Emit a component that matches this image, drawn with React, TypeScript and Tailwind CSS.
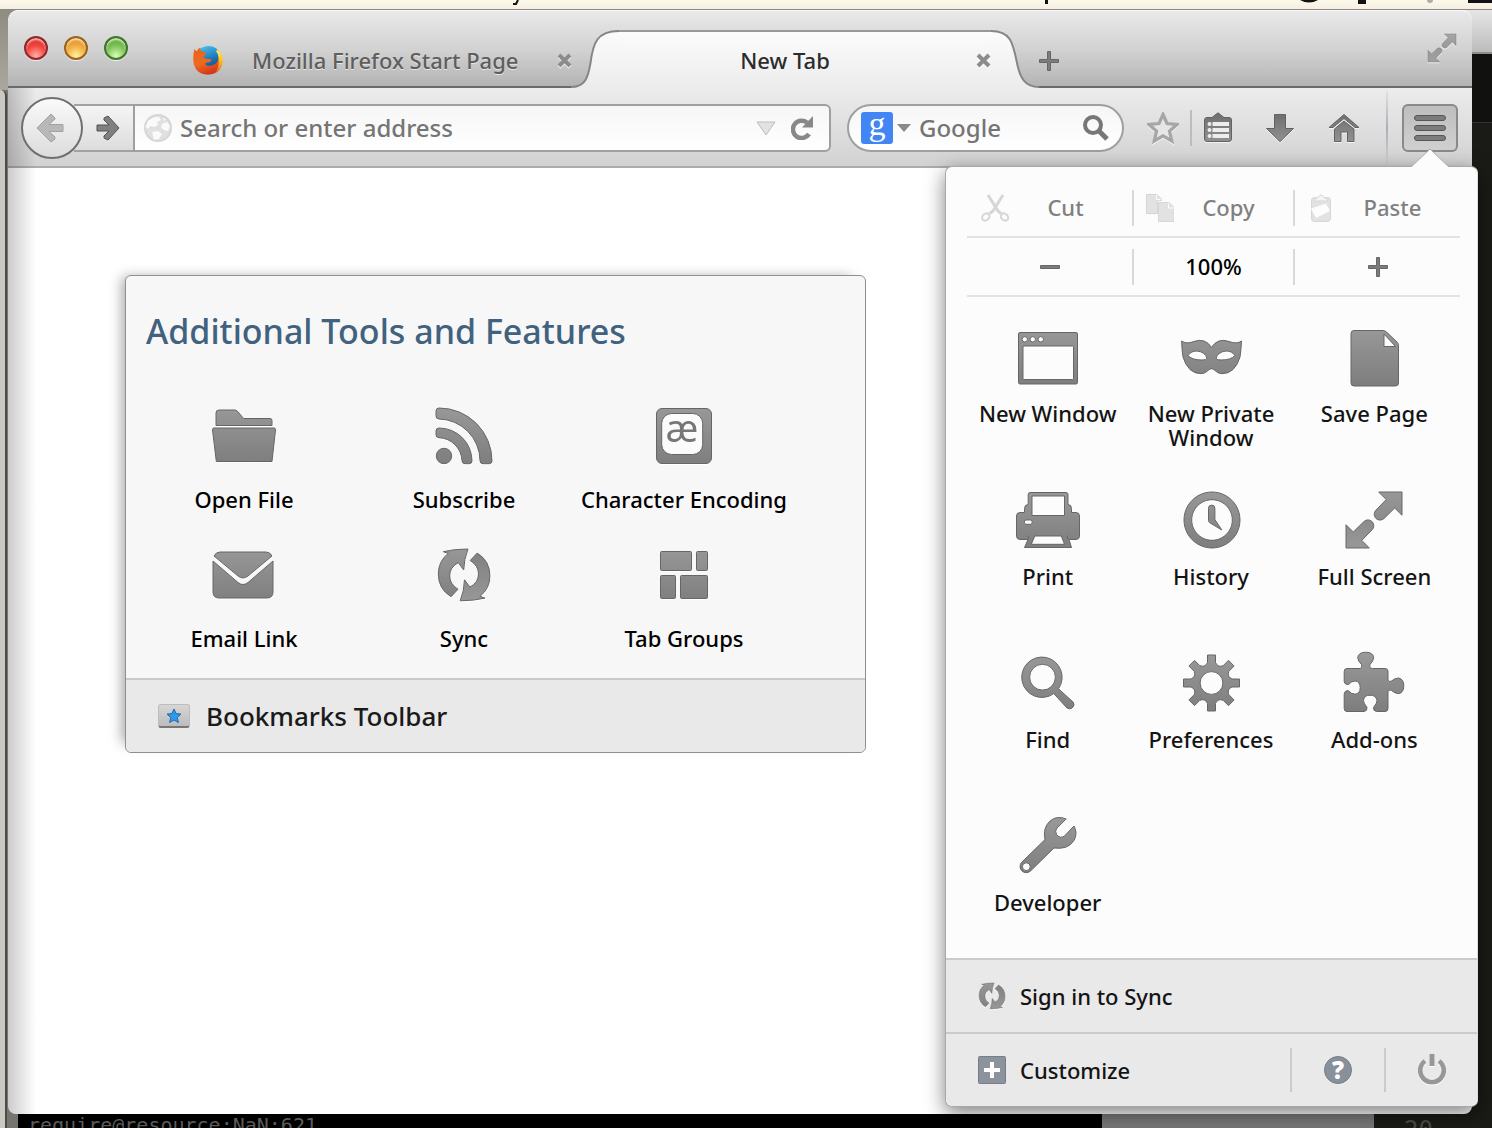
import type { ReactNode } from "react";

const gearPath = (() => {
  const pts: string[] = [];
  const at = (deg: number, r: number, side: number) => {
    const a = (deg * Math.PI) / 180;
    const x = 32.5 + r * Math.sin(a) + side * Math.cos(a);
    const y = 32 - r * Math.cos(a) + side * Math.sin(a);
    return `${x.toFixed(2)} ${y.toFixed(2)}`;
  };
  for (let k = 0; k < 8; k++) {
    const d = k * 45;
    pts.push(`${k === 0 ? "M" : "L"}${at(d, 20.5, -4)}L${at(d, 28, -4)}L${at(d, 28, 4)}L${at(d, 20.5, 4)}`);
    pts.push(`Q${at(d + 22.5, 16.5, 0)} ${at(d + 45, 20.5, -4)}`);
  }
  return pts.join("") + "ZM43.9 32A11.4 11.4 0 1 0 21.1 32A11.4 11.4 0 1 0 43.9 32Z";
})();

const syncHalf =
  "M11.3 8.7Q22 6 36 6Q32 16 31.7 27L26.3 19.7Q17.7 24 17.7 33Q17.7 41 26 46.3L19 53.7Q6.3 46 6.3 31Q6.3 18 16.3 10.5Z";
const arrowHalf = "M36.7 4H60V27.3L52.7 20L42 30.5A5.8 5.8 0 0 1 33.8 22.3L44.2 11.6Z";

function Defs() {
  return (
    <svg width="0" height="0" className="absolute" aria-hidden="true">
      <defs>
        <linearGradient id="metal" gradientUnits="userSpaceOnUse" x1="0" y1="0" x2="0" y2="64">
          <stop offset="0" stopColor="#9a9a9a" />
          <stop offset="1" stopColor="#7c7c7c" />
        </linearGradient>
        <linearGradient id="metalSmall" gradientUnits="userSpaceOnUse" x1="0" y1="0" x2="0" y2="32">
          <stop offset="0" stopColor="#6c6c6c" />
          <stop offset="1" stopColor="#949494" />
        </linearGradient>
        <linearGradient id="tabFill" x1="0" y1="0" x2="0" y2="1">
          <stop offset="0" stopColor="#fcfcfc" />
          <stop offset="1" stopColor="#ececec" />
        </linearGradient>
        <linearGradient id="foxBlue" x1="0.3" y1="0" x2="0.7" y2="1">
          <stop offset="0" stopColor="#45c3ee" />
          <stop offset="0.5" stopColor="#1f76b9" />
          <stop offset="1" stopColor="#183a78" />
        </linearGradient>
        <linearGradient id="foxOrange" x1="0" y1="0" x2="0.4" y2="1">
          <stop offset="0" stopColor="#e8641b" />
          <stop offset="0.6" stopColor="#ee6a1f" />
          <stop offset="1" stopColor="#d23a1c" />
        </linearGradient>
        <linearGradient id="foxTail" x1="0" y1="0" x2="0" y2="1">
          <stop offset="0" stopColor="#fff27a" />
          <stop offset="0.5" stopColor="#fbc31b" />
          <stop offset="1" stopColor="#ec6a1c" />
        </linearGradient>
      </defs>
    </svg>
  );
}

function Glyph({ children, className = "size-16" }: { children: ReactNode; className?: string }) {
  return (
    <svg
      viewBox="0 0 64 64"
      className={`${className} shrink-0 drop-shadow-[0_1px_0_#ffffff]`}
      fill="url(#metal)"
      stroke="#666666"
      strokeWidth="1"
      fillRule="evenodd"
      aria-hidden="true"
    >
      {children}
    </svg>
  );
}

const Sync = ({ className = "size-16" }: { className?: string }) => (
  <Glyph className={className}>
    <path d={syncHalf} />
    <path d={syncHalf} transform="rotate(180 32.1 31.9)" />
  </Glyph>
);

const Expand = ({ className = "size-16" }: { className?: string }) => (
  <Glyph className={className}>
    <path d={arrowHalf} />
    <path d={arrowHalf} transform="rotate(180 32 32)" />
  </Glyph>
);

const tools: [string, ReactNode][] = [
  ["Open File", <Glyph>
    <path d="M4 9q0-3 3-3H23q2 0 4 3l4.500 5.500H58q2 0 2 2V21.500H4Z" />
    <path d="M2 24H62q1.500 0 1.500 2L60 57.500H4.300L.5 26Q.5 24 2 24Z" />
  </Glyph>],
  ["Subscribe", <Glyph>
    <circle cx="12" cy="52" r="7.700" />
    <path d="M4 7q0-3 3-3A53 53 0 0 1 60 57q0 2.700-2.700 2.700H51q-3 0-3-3A42 42 0 0 0 7 15q-3 0-3-3Z" />
    <path d="M4 27q0-3 3-3A33 33 0 0 1 40 57q0 2.700-2.700 2.700H33q-3 0-3-3A24 24 0 0 0 7 33.700q-3 0-3-3Z" />
  </Glyph>],
  ["Character Encoding", <Glyph>
    <rect x="4.500" y="4.500" width="55" height="55" rx="5.500" />
    <rect x="9.700" y="9.500" width="41" height="41" rx="10" fill="#fbfbfb" />
    <text x="30" y="38" textAnchor="middle" fontSize="38" fill="#777777" stroke="none" className="font-[Noto_Sans,sans-serif] font-normal">æ</text>
  </Glyph>],
  ["Email Link", <Glyph>
    <path d="M2 13Q4 9 8 9H54Q58 9 60 13L36 33Q31 37 26 33Z" />
    <path d="M1 18L26 39.500Q31 43.500 36 39.500L61 18V49q0 6-6 6H7q-6 0-6-6Z" />
  </Glyph>],
  ["Sync", <Sync />],
  ["Tab Groups", <Glyph>
    <rect x="8.500" y="8.500" width="31" height="19" rx="1" />
    <rect x="44.500" y="8.500" width="11" height="19" rx="1" />
    <rect x="8.500" y="32.500" width="15" height="23" rx="1" />
    <rect x="28.500" y="32.500" width="27" height="23" rx="1" />
  </Glyph>],
];

const actions: [string, ReactNode][] = [
  ["New Window", <Glyph>
    <path d="M4 7.500H60q1.500 0 1.500 1.500V57.500q0 1.500-1.500 1.500H4q-1.500 0-1.500-1.500V9q0-1.500 1.500-1.500ZM8 21q-1 0-1 1V53.500q0 1 1 1H56.500q1 0 1-1V22q0-1-1-1Z" />
    <g fill="#fcfcfc">
      <circle cx="8.800" cy="14.300" r="2.700" /><circle cx="16.800" cy="14.300" r="2.700" /><circle cx="24.800" cy="14.300" r="2.700" />
    </g>
  </Glyph>],
  ["New Private Window", <Glyph>
    <path d="M2.600 16Q7 19.500 15 16.500Q26 12.500 32.500 22.300Q39 12.500 50 16.500Q58 19.500 62.500 16Q62 26 61 32Q56 48.700 43 48.700Q39 48.700 36 45.500Q32.500 42 29 45.500Q26 48.700 22 48.700Q9 48.700 4 32Q3 26 2.600 16ZM9 30.500Q12 26 18 26Q26.500 27 28 33.500Q27 35 23 35Q13 35 9 30.500ZM56 30.500Q53 26 47 26Q38.500 27 37 33.500Q38 35 42 35Q52 35 56 30.500Z" />
  </Glyph>],
  ["Save Page", <Glyph>
    <path d="M12 5.500H41Q43 5.500 45 7.500L55 17Q56.500 18.500 56.500 20.500V58q0 3-3 3H12q-3 0-3-3V8.500q0-3 3-3ZM42 9V21.500H53.500Z" />
  </Glyph>],
  ["Print", <Glyph>
    <path d="M14 4.500H50q2 0 2 2V16.500q3.500 0 3.500 4V24.500H60q3.500 0 3.500 3.500V48q0 3.500-3.500 3.500H53L55.500 59.500H8.500L12 51.500H4Q.5 51.500 .5 48V28q0-3.500 3.500-3.500H8.500V20.500q0-4 3.700-4V6.500q0-2 1.800-2ZM16 8V27.500H48.500V8ZM10 32a2.200 2.200 0 0 0 0 4.300H14.500a2.200 2.200 0 0 0 0-4.300ZM18.800 48L15.300 56.300H48.500L45.300 48Z" />
    <path d="M12.500 47.500V51M51.500 47.500V51" />
  </Glyph>],
  ["History", <Glyph>
    <path d="M33 4A28 28 0 1 1 32.990 4ZM33 11.700A20.300 20.300 0 1 0 33.010 11.700Z" />
    <path d="M29.500 20.300a3.200 3.200 0 0 1 6.400 0V31.500L42.800 42L30.800 34.800Q29.500 34 29.500 32.500Z" />
  </Glyph>],
  ["Full Screen", <Expand />],
  ["Find", <Glyph>
    <path d="M42.500 37.800L57 51Q59 53.500 57.200 55.800L55.800 57.200Q53.500 58.600 51 57L37.800 42.600A20.200 20.200 0 1 1 42.500 37.800ZM39.400 26.200A12.900 12.900 0 1 0 13.600 26.200A12.900 12.900 0 1 0 39.400 26.200Z" />
  </Glyph>],
  ["Preferences", <Glyph><path d={gearPath} /></Glyph>],
  ["Add-ons", <Glyph>
    <path d="M5 17.500H17Q20.500 17.500 19.500 13.500Q15.700 10 15.700 6.500Q16.500 1.200 23.700 1.200Q31 1.200 31.700 6.500Q31.500 10 28 13.500Q27 17.500 30.500 17.500H43Q46 17.500 46 20.500V29Q46.500 31.500 49.500 30Q53 27 56.500 27Q61.800 28 61.800 34.700Q61.800 42 56.500 42.700Q53 42.500 49.500 39.500Q46.500 38 46 41V57.500Q46 60.500 43 60.500H34.500Q31 60 31.500 56.500Q35 52 35 49.500Q34 44.200 28 44.200Q22 44.200 21.500 49.500Q21.500 52 25 56.500Q25.500 60 22 60.500H5Q2.200 60.500 2.200 57.500V43Q2.500 39.500 6 39.500Q9.500 43.200 13 43.200Q18.200 42.500 18.200 36.700Q18.200 30.500 13 30Q9.500 30 6.500 33.500Q3 34 2.200 31V20.500Q2.200 17.500 5 17.500Z" />
  </Glyph>],
  ["Developer", <Glyph>
    <path d="M50.200 5L41 14Q38.500 17 40.500 20.500Q44 25 48.500 22L58 12Q62 19 58 26.500Q52 36 38 34L14.500 57A6.200 6.200 0 0 1 5.500 48.500L29 25.500Q26.500 14 34 7Q41 1 50.200 5ZM14.200 52.700A3.900 3.900 0 1 0 6.400 52.700A3.900 3.900 0 1 0 14.200 52.700Z" />
  </Glyph>],
];

const edits: [string, ReactNode][] = [
  ["Cut", <>
    <path d="M7 1L17 17L20 19.500M22 1L12 17L8.500 19.500" strokeWidth="3" fill="none" />
    <ellipse cx="4.800" cy="23" rx="4" ry="3.200" fill="none" strokeWidth="2" transform="rotate(-45 4.800 23)" />
    <ellipse cx="23.500" cy="23" rx="4" ry="3.200" fill="none" strokeWidth="2" transform="rotate(45 23.500 23)" />
  </>],
  ["Copy", <>
    <path d="M.5 .5H11L15.500 5V6.500H11.500V19.500H.5Z" />
    <path d="M12.500 8.500H23L28 13.500V27.500H12.500Z" />
    <path d="M10.500 1V5.500H15M22.500 9V14H27.500" stroke="#fcfcfc" fill="none" />
  </>],
  ["Paste", <>
    <rect x="4.500" y="3.500" width="19" height="24" rx="3" />
    <path d="M7 7Q8.500 3.500 11 3.500Q14 -1.500 17 3.500Q19.500 3.500 21 7Z" fill="#f4f4f4" />
    <path d="M4 14.500L19 9.500L23 17L9 24Z" fill="#fcfcfc" stroke="none" />
  </>],
];

function CloseX() {
  return (
    <svg viewBox="0 0 15 15" className="size-[15px] drop-shadow-[0_1px_0_#ffffff]" aria-hidden="true">
      <path d="M2 2L13 13M13 2L2 13" stroke="#8c8c8c" strokeWidth="4" />
    </svg>
  );
}

function Small({ children }: { children: ReactNode }) {
  return (
    <svg viewBox="0 0 32 32" className="size-8 drop-shadow-[0_1px_0_#f4f4f4]" fill="url(#metalSmall)" stroke="#626262" strokeWidth="1" aria-hidden="true">
      {children}
    </svg>
  );
}

const PlusMinus = ({ plus }: { plus?: boolean }) => (
  <svg viewBox="0 0 20 20" className="size-5" fill="#7c7c7c" stroke="#666666" aria-hidden="true">
    <path d={plus ? "M8.500 .5H11.500V8.500H19.500V11.500H11.500V19.500H8.500V11.500H.5V8.500H8.500Z" : "M.5 8.500H19.500V11.500H.5Z"} />
  </svg>
);

function Desktop() {
  return (
    <div className="absolute inset-0 flex flex-col" aria-hidden="true">
      <div className="h-[10px] border-b border-[#8b8982] bg-gradient-to-b from-[#fcf8ea] to-[#f4efe2]">
        <svg width="1492" height="9" className="block">
          <path d="M518 0L516 4L513 4" stroke="#111111" strokeWidth="2" fill="none" />
          <path d="M1045 0H1048V4H1045ZM1358 0H1366V4H1358ZM1468 0H1492V3H1468ZM1300 0H1318Q1309 5 1300 0Z" fill="#111111" />
          <circle cx="1430" cy="0" r="3" fill="#b0ada3" />
        </svg>
      </div>
      <div className="flex flex-1">
        <div className="flex w-[18px] flex-col bg-[#77756f]">
          <div className="h-[80px] bg-gradient-to-b from-[#8f8c82] to-[#aaa89e]" />
          <div className="w-[7px] flex-1 rounded-tr-md border-r-2 border-[#4e4c48] bg-[#c9c8c3]" />
        </div>
        <div className="flex flex-1 flex-col justify-end bg-black">
          <p className="h-[14px] overflow-hidden pl-[10px] font-['DejaVu_Sans_Mono',monospace] text-[20px] leading-[22px] text-[#5b5b5b]">require@resource:NaN:621</p>
        </div>
        <div className="w-[272px] bg-[#777777]" />
        <div className="flex w-[118px] flex-col bg-[#1a1a16]">
          <div className="h-[44px] border-b-2 border-[#8d8d8d] bg-gradient-to-b from-[#e6e6e6] to-[#bcbcbc]" />
          <div className="h-[69px] border-b border-[#333333] bg-[#11110f]" />
          <p className="mt-auto h-[10px] overflow-hidden pl-[30px] font-['DejaVu_Sans_Mono',monospace] text-[24px] leading-6 text-[#4a4a46]">20</p>
        </div>
      </div>
    </div>
  );
}

function TabStrip() {
  return (
    <div className="flex h-[78px] items-end rounded-t-[10px] border-t border-[#f8f8f8] bg-gradient-to-b from-[#e9e9e9] via-[#d2d2d2] to-[#b2b2b2]">
      <div className="flex h-full border-b-2 border-[#6b6b6b] pl-4">
        <div className="mt-[25px] flex gap-4">
          <button aria-label="Close window" className="size-6 rounded-full border-2 border-[#8c2a28] bg-[radial-gradient(circle_at_50%_90%,#ffb0a8,#f4453f_50%,#c22a28)] shadow-[0_1px_0_#f0f0f0,inset_0_2px_2px_#ffb5b0]" />
          <button aria-label="Minimize window" className="size-6 rounded-full border-2 border-[#9a6420] bg-[radial-gradient(circle_at_50%_90%,#fff3a0,#f2ac40_50%,#cf8426)] shadow-[0_1px_0_#f0f0f0,inset_0_2px_2px_#ffe0a8]" />
          <button aria-label="Zoom window" className="size-6 rounded-full border-2 border-[#41752b] bg-[radial-gradient(circle_at_50%_90%,#d6ffb0,#7ec25a_50%,#4f9433)] shadow-[0_1px_0_#f0f0f0,inset_0_2px_2px_#cdf0b4]" />
        </div>
        <div className="mt-[19px] ml-[65px] flex h-[60px] w-[379px] items-center">
          <svg viewBox="0 0 30 30" className="size-[30px] shrink-0" aria-hidden="true">
            <circle cx="15.500" cy="14.500" r="13.500" fill="url(#foxBlue)" />
            <path d="M1.500 4Q2.500 6 4 6Q5 3 7.500 2.500Q7 4.500 8 6.500Q11 6 13 7.500Q13.500 10 10.500 11Q10 12.500 12 13.500Q14 14 18.500 14.500Q18 18 13.500 17.500Q11 19.500 14 20.500Q19 21.500 23 18.500Q25 16.500 25.500 13Q29.500 16 28.700 20Q26 29.500 15 29.800Q3.500 29.500 .7 19Q-.5 10 1.500 4Z" fill="url(#foxOrange)" />
            <path d="M23 3Q30.500 9 29.700 17Q28.500 24 23 27.500Q26.500 20 25.600 13Q25 8 22.500 5.500Q24 5.500 24.500 6.500Q24.500 4.500 23 3Z" fill="url(#foxTail)" />
          </svg>
          <span className="ml-[29px] text-[22px] whitespace-nowrap text-[#5e5e5e] [text-shadow:0_1px_0_#e6e6e6]">Mozilla Firefox Start Page</span>
          <button aria-label="Close Mozilla Firefox Start Page" className="ml-auto"><CloseX /></button>
        </div>
      </div>
      <svg viewBox="0 0 48 58" className="-ml-[1px] h-[58px] w-12 shrink-0" aria-hidden="true">
        <path d="M0 57C14 57 17 48 19.500 33C22 13 26 1 48 1V58H0Z" fill="url(#tabFill)" />
        <path d="M0 57C14 57 17 48 19.500 33C22 13 26 1 48 1" fill="none" stroke="#868686" strokeWidth="2" />
      </svg>
      <div className="flex h-[58px] w-[372px] items-center border-t-2 border-[#999999] bg-gradient-to-b from-[#fcfcfc] to-[#ececec]">
        <span className="flex-1 pr-[25px] text-center text-[22px] text-[#2c2c2c]">New Tab</span>
        <button aria-label="Close New Tab"><CloseX /></button>
      </div>
      <svg viewBox="0 0 48 58" className="h-[58px] w-12 shrink-0" aria-hidden="true">
        <path d="M48 57C34 57 29 48 26 33C22 13 20 1 0 1V58H48Z" fill="url(#tabFill)" />
        <path d="M48 57C34 57 29 48 26 33C22 13 20 1 0 1" fill="none" stroke="#868686" strokeWidth="2" />
      </svg>
      <div className="flex h-full flex-1 justify-between border-b-2 border-[#6b6b6b] pr-[14px]">
        <button aria-label="Open a new tab" className="mt-10 self-start"><PlusMinus plus /></button>
        <button aria-label="Enter full screen" className="mt-[21px] self-start opacity-80"><Expand className="size-8" /></button>
      </div>
    </div>
  );
}

function Toolbar() {
  return (
    <div className="flex h-20 items-center border-b-2 border-[#acacac] bg-gradient-to-b from-[#ececec] to-[#d2d2d2] pt-[2px] pr-[14px] pl-[13px]">
      <button aria-label="Back" className="z-10 flex size-[62px] shrink-0 items-center justify-center rounded-full border-2 border-[#6f6f6f] bg-gradient-to-b from-[#fafafa] to-[#dcdcdc] pr-1">
        <svg viewBox="0 0 28 32" className="h-8 w-7" aria-hidden="true">
          <path d="M1 16L15 2L19 6V7L13 12.500H27V19.500H13L19 25V27L15 30Z" fill="#b8b8b8" stroke="#a2a2a2" strokeLinejoin="round" />
        </svg>
      </button>
      <button aria-label="Forward" className="-ml-[9px] flex h-12 w-[59px] shrink-0 items-center justify-end border-y-2 border-[#a2a2a2] bg-gradient-to-b from-[#f4f4f4] to-[#dddddd] pr-[13px]">
        <svg viewBox="0 0 24 26" className="h-[26px] w-6" aria-hidden="true">
          <path d="M23 13L12 1L8 3V5L13 10H1V16H13L8 21V23L12 25Z" fill="#808080" stroke="#505050" strokeLinejoin="round" />
        </svg>
      </button>
      <div className="flex h-12 min-w-0 flex-1 items-center rounded-r-[6px] border-2 border-[#9f9f9f] bg-gradient-to-b from-[#f6f6f6] to-white pr-4 pl-[9px]">
        <svg viewBox="0 0 28 28" className="size-7 shrink-0" aria-hidden="true">
          <circle cx="14" cy="14" r="13" fill="#e0e0e0" stroke="#d6d6d6" strokeWidth="2" />
          <path d="M4 7Q8 3 15 3L17 6L13 8L14 11L10 13L6 12L4 15L1.500 13ZM18 10L23 8L26 12L24 17L20 16L17 13ZM8 18L14 17L18 20L15 25L10 26ZM19 4L22 5L20 7Z" fill="#fafafa" />
        </svg>
        <input aria-label="Search or enter address" placeholder="Search or enter address" className="ml-2 min-w-0 flex-1 bg-transparent text-[24px] font-medium outline-none placeholder:text-[#757575]" />
        <button aria-label="Show history">
          <svg viewBox="0 0 20 15" className="h-[15px] w-5" aria-hidden="true"><path d="M1 1H19L10 14Z" fill="#e2e2e2" stroke="#bcbcbc" /></svg>
        </button>
        <button aria-label="Reload" className="ml-[15px]">
          <svg viewBox="0 0 22 24" className="h-6 w-[22px]" aria-hidden="true">
            <path d="M18 18A8.700 8.700 0 1 1 16 6.500" fill="none" stroke="#888888" strokeWidth="4.500" />
            <path d="M22 0V11.500H11Z" fill="#888888" />
          </svg>
        </button>
      </div>
      <div className="ml-4 flex h-12 w-[277px] shrink-0 items-center rounded-full border-2 border-[#9f9f9f] bg-gradient-to-b from-[#f6f6f6] to-white pr-[13px] pl-3">
        <button aria-label="Choose search engine" className="flex items-center gap-1">
          <span className="flex size-8 justify-center rounded-[3px] bg-[#4285f4] font-['Liberation_Serif',serif] text-[34px] leading-6 text-white">g</span>
          <svg viewBox="0 0 14 8" className="h-2 w-[14px]" aria-hidden="true"><path d="M0 0H14L7 8Z" fill="#8a8a8a" /></svg>
        </button>
        <input aria-label="Search with Google" placeholder="Google" className="ml-2 min-w-0 flex-1 bg-transparent text-[24px] font-medium outline-none placeholder:text-[#757575]" />
        <button aria-label="Search">
          <svg viewBox="0 0 26 26" className="size-[26px]" aria-hidden="true" fill="none" stroke="#777777">
            <circle cx="10" cy="10" r="8" strokeWidth="4" /><path d="M16 16L24 24" strokeWidth="5" />
          </svg>
        </button>
      </div>
      <button aria-label="Bookmark this page" className="ml-[23px]">
        <Small><path d="M16 2.500L20 11.500L30 12.500L22.500 19L24.800 29L16 23.800L7.200 29L9.500 19L2 12.500L12 11.500Z" fill="#e6e6e6" stroke="#a6a6a6" strokeWidth="3.200" /></Small>
      </button>
      <div className="mr-[10px] ml-[11px] h-9 w-[2px] bg-[#bdbdbd]" />
      <button aria-label="Show your bookmarks">
        <Small>
          <path d="M10 5.500L16 .8L22 5.500H27q2.500 0 2.500 2.500V27q0 2.500-2.500 2.500H5q-2.500 0-2.500-2.500V8q0-2.500 2.500-2.500Z" />
          <g fill="#ededed" stroke="none">
            <path d="M10.500 10H27V14H10.500ZM10.500 16H27V20H10.500ZM10.500 22H27V26H10.500Z" />
            <circle cx="7.500" cy="12" r="2" /><circle cx="7.500" cy="18" r="2" /><circle cx="7.500" cy="24" r="2" />
          </g>
        </Small>
      </button>
      <button aria-label="Downloads" className="ml-[30px]">
        <Small><path d="M10.500 2.500H21.500V16.500H29.500L16 29.700L2.500 16.500H10.500Z" /></Small>
      </button>
      <button aria-label="Home" className="ml-8">
        <Small>
          <path d="M1 15.500L16 2.500L31 15.500H27L16 6.500L5 15.500Z" />
          <path d="M16 9L26 17V29.500H19.500V20H13V29.500H6.500V17Z" />
        </Small>
      </button>
      <div className="ml-[26px] h-[74px] w-[2px] bg-gradient-to-b from-[#e0e2e4] via-[#a9b0b8] to-[#d0d2d4]" />
      <button aria-label="Open menu" className="ml-[14px] flex h-12 w-14 shrink-0 flex-col items-center justify-center gap-1 rounded-[6px] border-2 border-[#8a8a8a] bg-gradient-to-b from-[#bebebe] to-[#d0d0d0]">
        <span className="h-[6px] w-8 rounded-full border border-[#565656] bg-[#7c7c7c]" />
        <span className="h-[6px] w-8 rounded-full border border-[#565656] bg-[#7c7c7c]" />
        <span className="h-[6px] w-8 rounded-full border border-[#565656] bg-[#7c7c7c]" />
      </button>
    </div>
  );
}

function ToolsCard() {
  return (
    <section className="w-[741px] rounded-[6px] border border-[#8f8f8f] bg-[#f7f7f7] shadow-[-9px_-4px_12px_-6px_rgba(0,0,0,0.35)]">
      <h1 className="pt-[33px] pl-5 text-[34px] leading-[44px] text-[#41627f]">Additional Tools and Features</h1>
      <div className="mt-[51px] ml-2 grid w-[660px] grid-cols-3 gap-y-[32px] pb-7">
        {tools.map(([label, icon]) => (
          <button key={label} className="flex flex-col items-center text-[22px] leading-6 text-black">
            {icon}
            <span className="mt-[19px]">{label}</span>
          </button>
        ))}
      </div>
      <button className="flex h-[74px] w-full items-center gap-[16px] rounded-b-[6px] border-t-2 border-[#c9c9c9] bg-[#e9e9e9] pl-8 text-[26px] text-[#1a1a1a]">
        <span className="flex h-6 w-8 items-center justify-center rounded-[3px] border border-b-2 border-[#bdbdbd] border-b-[#777777] bg-gradient-to-b from-[#d6d6d6] to-[#bcbcbc]">
          <svg viewBox="0 0 16 16" className="size-4" aria-hidden="true">
            <path d="M8 1L10.100 5.600L15 6.100L11.300 9.500L12.400 14.500L8 12L3.600 14.500L4.700 9.500L1 6.100L5.900 5.600Z" fill="#2f9be6" stroke="#1d6bb0" />
          </svg>
        </span>
        Bookmarks Toolbar
      </button>
    </section>
  );
}

function MenuPanel() {
  return (
    <div className="absolute top-[166px] right-[14px] w-[533px] rounded-[7px] border border-[#a8a8a8] border-r-[#dddddd] bg-[#fcfcfc] text-[22px] leading-6 text-[#141414] shadow-[0_6px_20px_rgba(0,0,0,0.5)]">
      <svg viewBox="0 0 38 20" className="absolute -top-[19px] right-[28px] h-5 w-[38px]" aria-hidden="true">
        <path d="M0 19L19 1L38 19V20H0Z" fill="#fcfcfc" />
        <path d="M0 19L19 1L38 19" fill="none" stroke="#a8a8a8" />
      </svg>
      <div className="mr-[17px] ml-[21px] pt-3">
        <div className="grid h-[59px] grid-cols-[165fr_161fr_167fr] items-center border-b-2 border-[#e3e3e3]">
          {edits.map(([label, icon]) => (
            <button key={label} disabled className="flex h-9 items-center border-l-2 border-[#d9d9d9] pr-[10px] pl-3 text-[#808080] first:border-transparent">
              <svg viewBox="0 0 28 28" className="size-7 shrink-0" fill="#e2e2e2" stroke="#d6d6d6" aria-hidden="true">{icon}</svg>
              <span className="flex-1 pb-[2px] text-center">{label}</span>
            </button>
          ))}
        </div>
        <div className="grid h-[59px] grid-cols-[165fr_161fr_167fr] items-center border-b-2 border-[#e3e3e3]">
          <button aria-label="Zoom out" className="flex h-9 items-center justify-center"><PlusMinus /></button>
          <button aria-label="Reset zoom" className="h-9 border-l-2 border-[#d9d9d9] pb-[2px] text-black">100%</button>
          <button aria-label="Zoom in" className="flex h-9 items-center justify-center border-l-2 border-[#d9d9d9]"><PlusMinus plus /></button>
        </div>
      </div>
      <div className="mr-[21px] ml-5 grid auto-rows-[127px] grid-cols-3 gap-y-9 pt-7 pb-[17px]">
        {actions.map(([label, icon]) => (
          <button key={label} className="flex flex-col items-center">
            {icon}
            <span className="mt-3 max-w-[150px]">{label}</span>
          </button>
        ))}
      </div>
      <div className="rounded-b-[7px] bg-[#e9e9e9]">
        <button className="flex h-[74px] w-full items-center gap-3 border-t-2 border-[#cbcbcb] pl-[30px]">
          <Sync className="size-8" />
          Sign in to Sync
        </button>
        <div className="flex h-[74px] items-center border-t-2 border-[#cbcbcb]">
          <button className="flex flex-1 items-center gap-[14px] pl-8">
            <svg viewBox="0 0 28 28" className="size-7" aria-hidden="true">
              <rect x=".5" y=".5" width="27" height="27" rx="1" fill="#8c939c" stroke="#767d86" />
              <path d="M12 6H16V12H22V16H16V22H12V16H6V12H12Z" fill="#ffffff" />
            </svg>
            Customize
          </button>
          <button aria-label="Help" className="flex h-11 w-[94px] items-center justify-center border-l-2 border-[#cbcbcb]">
            <span className="flex size-7 items-center justify-center rounded-full border border-[#767d86] bg-[#88909a] font-['Open_Sans',sans-serif] text-[24px] font-extrabold text-white">?</span>
          </button>
          <button aria-label="Quit" className="flex h-11 w-[93px] items-center justify-center border-l-2 border-[#cbcbcb]">
            <svg viewBox="0 0 28 32" className="h-8 w-7 drop-shadow-[0_1px_0_#ffffff]" aria-hidden="true" fill="none" stroke="#979797">
              <path d="M7 7A11.800 11.800 0 1 0 21 7" strokeWidth="4.600" />
              <path d="M14 0V12" strokeWidth="5" />
            </svg>
          </button>
        </div>
      </div>
    </div>
  );
}

export default function App() {
  return (
    <div className="relative flex min-h-screen flex-col overflow-hidden bg-[#1a1a16] pt-[10px] pr-5 pb-[14px] pl-2 font-['Noto_Sans','Lucida_Grande',sans-serif] font-medium">
      <Defs />
      <Desktop />
      <main className="relative flex flex-1 flex-col overflow-hidden rounded-t-[10px] rounded-b-[8px] bg-white">
        <TabStrip />
        <Toolbar />
        <div className="flex-1 pt-[107px] pb-10 pl-[117px]">
          <ToolsCard />
        </div>
        <div className="pointer-events-none absolute top-[78px] bottom-0 left-0 w-7 bg-gradient-to-r from-black/20 to-transparent" />
      </main>
      <MenuPanel />
    </div>
  );
}
